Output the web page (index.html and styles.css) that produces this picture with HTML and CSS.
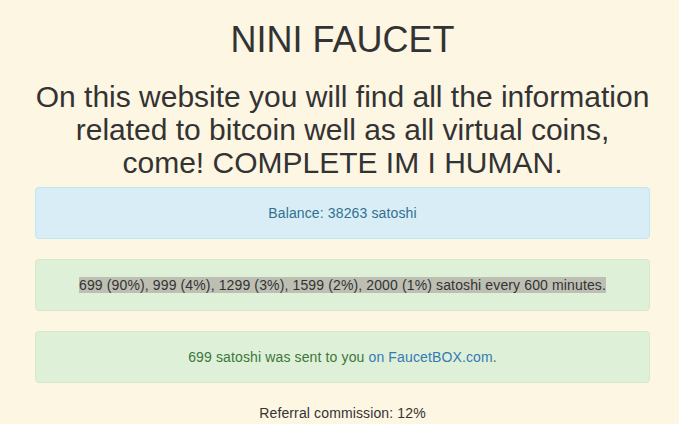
FILE: index.html
```html
<!DOCTYPE html>
<html>
<head>
<meta charset="utf-8">
<title>NINI FAUCET</title>
<link rel="stylesheet" href="styles.css">
</head>
<body>
<div class="page">
  <h1 class="title">NINI FAUCET</h1>
  <h2 class="lead">On this website you will find all the information related to bitcoin well as all virtual coins, come! COMPLETE IM I HUMAN.</h2>
  <div class="alert alert-info">Balance: 38263 satoshi</div>
  <div class="alert alert-success"><span class="mark">699 (90%), 999 (4%), 1299 (3%), 1599 (2%), 2000 (1%) satoshi every 600 minutes.</span></div>
  <div class="alert alert-success">699 satoshi was sent to you <a class="link" href="#">on FaucetBOX.com</a>.</div>
  <p class="ref">Referral commission: 12%</p>
</div>
</body>
</html>
```
FILE: styles.css
```css
html, body {
  margin: 0;
  padding: 0;
  background: #fdf6e3;
}
body {
  font-family: "Liberation Sans", Arial, sans-serif;
  font-size: 14px;
  line-height: 20px;
  color: #333;
  letter-spacing: 0.13px;
}
.page {
  padding: 0 29px 0 35px;
  text-align: center;
}
.title {
  font-size: 36px;
  font-weight: normal;
  line-height: 1.1;
  letter-spacing: 0;
  margin: 20px 0 10px;
}
.lead {
  font-size: 30px;
  font-weight: normal;
  line-height: 1.1;
  letter-spacing: 0;
  margin: 20px 0 8px;
}
.alert {
  padding: 15px;
  border: 1px solid transparent;
  border-radius: 4px;
  margin-bottom: 20px;
}
.alert-info {
  background: #d9edf7;
  border-color: #bce8f1;
  color: #31708f;
}
.alert-success {
  background: #dff0d8;
  border-color: #d6e9c6;
  color: #3c763d;
}
.mark {
  background: #bdbfb3;
  color: #333;
}
.link {
  color: #337ab7;
  text-decoration: none;
}
.ref {
  margin: 0;
}
```
